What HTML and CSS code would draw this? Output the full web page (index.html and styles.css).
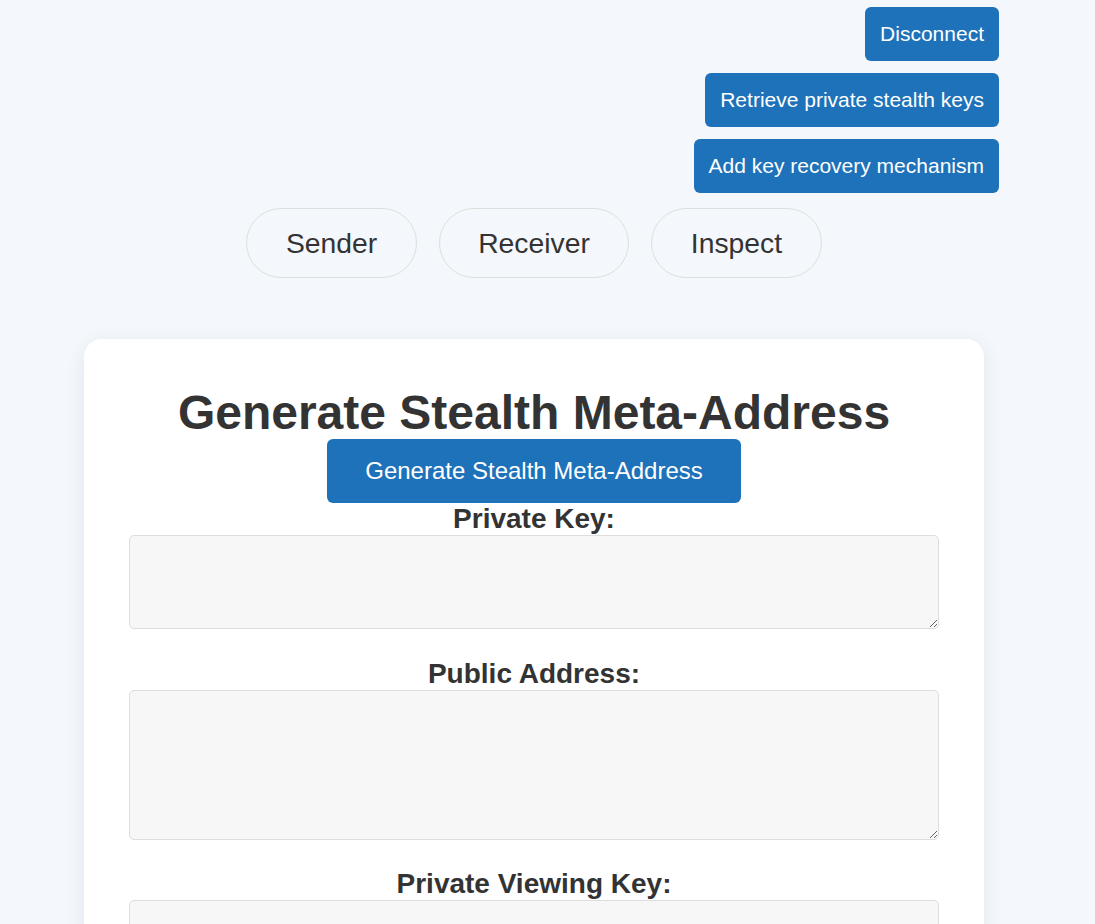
FILE: index.html
```html
<!DOCTYPE html>
<html lang="en">
<head>
<meta charset="utf-8">
<title>Stealth Meta-Address</title>
<link rel="stylesheet" href="styles.css">
</head>
<body>
  <div class="topbar">
    <button class="btn-top">Disconnect</button>
    <button class="btn-top">Retrieve private stealth keys</button>
    <button class="btn-top">Add key recovery mechanism</button>
  </div>
  <main class="main">
    <nav class="tabs">
      <button class="tab">Sender</button>
      <button class="tab">Receiver</button>
      <button class="tab">Inspect</button>
    </nav>
    <section class="card">
      <h1 class="title">Generate Stealth Meta-Address</h1>
      <div class="actions">
        <button class="btn-primary">Generate Stealth Meta-Address</button>
      </div>
      <label class="label" for="pk">Private Key:</label>
      <textarea id="pk" class="field field-sm"></textarea>
      <label class="label" for="pa">Public Address:</label>
      <textarea id="pa" class="field field-md"></textarea>
      <label class="label" for="pv">Private Viewing Key:</label>
      <textarea id="pv" class="field field-sm"></textarea>
    </section>
  </main>
</body>
</html>
```
FILE: styles.css
```css
* { box-sizing: border-box; }
html, body { margin: 0; padding: 0; }
body {
  background: #f4f7fb;
  font-family: "Liberation Sans", Arial, sans-serif;
  color: #333333;
  min-height: 924px;
}
.topbar {
  display: flex;
  flex-direction: column;
  align-items: flex-end;
  gap: 12px;
  padding-top: 7px;
  padding-right: 96px;
}
.btn-top {
  font-family: "Liberation Sans", Arial, sans-serif;
  font-size: 21px;
  line-height: 24px;
  padding: 15px 15px;
  color: #ffffff;
  background: #1e72b9;
  border: none;
  border-radius: 6px;
}
.main {
  width: 900px;
  margin-left: 84px;
}
.tabs {
  display: flex;
  justify-content: center;
  gap: 22px;
  margin-top: 15px;
}
.tab {
  font-family: "Liberation Sans", Arial, sans-serif;
  font-size: 28.3px;
  line-height: 32px;
  padding: 18px 38.5px;
  color: #333333;
  background: transparent;
  border: 1px solid #dedede;
  border-radius: 35px;
}
.card {
  margin-top: 61px;
  background: #ffffff;
  border-radius: 18px;
  box-shadow: 0 4px 20px rgba(30, 50, 90, 0.08);
  padding: 47px 45px 60px;
  text-align: center;
}
.title {
  margin: 0;
  font-size: 48px;
  line-height: 53px;
  font-weight: bold;
  color: #333333;
}
.actions {
  display: flex;
  justify-content: center;
}
.btn-primary {
  font-family: "Liberation Sans", Arial, sans-serif;
  font-size: 24px;
  line-height: 28px;
  padding: 18px 38px;
  color: #ffffff;
  background: #1e72b9;
  border: none;
  border-radius: 6px;
}
.label {
  display: block;
  font-size: 28px;
  line-height: 32px;
  font-weight: bold;
  color: #333333;
}
.field {
  display: block;
  width: 100%;
  background: #f7f7f7;
  border: 1px solid #dddddd;
  border-radius: 5px;
  margin: 0 0 28.5px 0;
  font-family: "Liberation Mono", monospace;
  font-size: 14px;
}
.field-sm { height: 94px; }
.field-md { height: 150px; }
```
